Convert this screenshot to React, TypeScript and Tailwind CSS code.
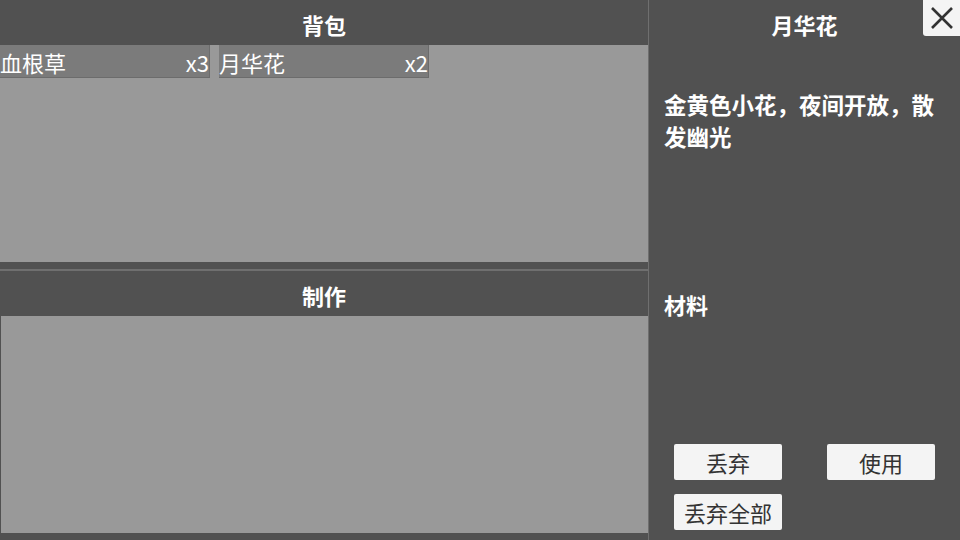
const items = [
  { name: "血根草", count: 3 },
  { name: "月华花", count: 2 },
];

function PanelHeader({ title }: { title: string }) {
  return (
    <div className="h-[45px] flex items-center justify-center pt-[4px] text-[22px] font-bold text-white">
      {title}
    </div>
  );
}

export default function App() {
  return (
    <div
      className="w-[960px] h-[540px] flex bg-[#515151] overflow-hidden relative"
      style={{ fontFamily: '"Noto Sans CJK SC", "Noto Sans", sans-serif' }}
    >
      {/* left: bag + crafting */}
      <div className="w-[649px] flex flex-col border-r border-[#6f6f6f]">
        <PanelHeader title="背包" />
        <div className="h-[217px] bg-[#999999] flex items-start gap-[9px]">
          {items.map((it) => (
            <div
              key={it.name}
              className="w-[210px] h-[33px] bg-[#7b7b7b] border-r border-b border-[#6c6c6c] flex items-center justify-between pt-[2px] text-[22px] leading-none text-white"
            >
              <span>{it.name}</span>
              <span>x{it.count}</span>
            </div>
          ))}
        </div>
        <div className="h-[7px]" />
        <div className="border-t-2 border-[#6f6f6f]">
          <PanelHeader title="制作" />
        </div>
        <div className="h-[217px] bg-[#999999] ml-px" />
      </div>

      {/* right: item detail */}
      <div className="flex-1 flex flex-col px-[15px] text-white">
        <div className="h-[48px] flex items-center justify-center text-[22px] font-bold">
          月华花
        </div>
        <p className="mt-[40px] text-[22.5px] leading-[32px] font-bold">
          金黄色小花，夜间开放，散发幽光
        </p>
        <div className="mt-[136px] text-[22px] leading-[32px] font-bold">材料</div>
        <div className="mt-auto pb-[10px] pl-[10px] grid grid-cols-[108px_108px] gap-x-[45px] gap-y-[14px]">
          <button className="h-[36px] bg-[#f4f4f4] rounded-[2px] text-[22px] text-[#333333]">丢弃</button>
          <button className="h-[36px] bg-[#f4f4f4] rounded-[2px] text-[22px] text-[#333333]">使用</button>
          <button className="h-[36px] bg-[#f4f4f4] rounded-[2px] text-[22px] text-[#333333]">丢弃全部</button>
        </div>
      </div>

      <button className="absolute top-0 right-0 w-[37px] h-[36px] bg-[#f4f4f4] rounded-bl-[3px] flex items-center justify-center text-[#333333]">
        <svg width="24" height="24" viewBox="0 0 24 24" fill="none" stroke="currentColor" strokeWidth="2.6" strokeLinecap="butt">
          <path d="M2 2L22 22M22 2L2 22" />
        </svg>
      </button>
    </div>
  );
}
